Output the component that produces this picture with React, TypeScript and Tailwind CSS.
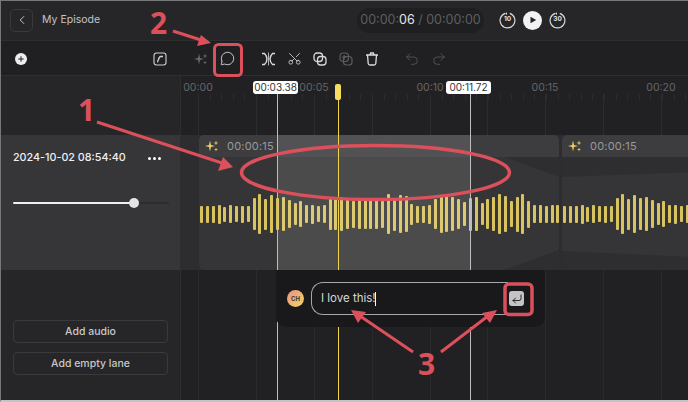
import React from "react";
import { MessageCircle, Scissors, Undo2, Redo2, ChevronLeft, Plus, CornerDownLeft } from "lucide-react";

const BARS = [17,17,17,19,15,18,16,17,16,32,40,31,38,32,34,28,22,26,18,19,16,18,32,32,34,30,27,29,30,30,30,27,40,33,38,36,21,17,17,19,30,38,36,34,30,24,33,34,22,30,34,40,36,26,35,40,27,18,18,17,18,18];
const MAJOR = [198,256,314,372,430,487,545,603,661];
const MINOR = Array.from({ length: 45 }, (_, i) => 198 + i * 11.6);
const LABELS = [["00:00",198],["00:05",314],["00:10",430],["00:15",545],["00:20",661]] as const;

function Sparkle({ dim }: { dim?: boolean }) {
  return (
    <svg width="14" height="14" viewBox="0 0 14 14" fill={dim ? "#6a6a6c" : "#e8cf5c"}>
      <path d="M5 1.5 L6 6 L10 7 L6 8 L5 12.5 L4 8 L0 7 L4 6 Z" />
      <path d="M11 1.5 L11.6 3.4 L13.5 4 L11.6 4.6 L11 6.5 L10.4 4.6 L8.5 4 L10.4 3.4 Z" />
      <path d="M11 8.5 L11.5 10 L13 10.5 L11.5 11 L11 12.5 L10.5 11 L9 10.5 L10.5 10 Z" />
    </svg>
  );
}

function Clip({ width, second }: { width: number; second?: boolean }) {
  return (
    <div className="relative h-full shrink-0 overflow-hidden rounded-[5px] bg-[#353537]" style={{ width }}>
      <svg className="absolute inset-0" width={width} height="135">
        {second ? (
          <>
            <polygon points="0,42 130,37 130,0 0,0" fill="#2e2e30" />
            <polygon points="0,116 130,122 130,135 0,135" fill="#2e2e30" />
          </>
        ) : (
          <>
            <polygon points="306,22 360,42 360,22" fill="#2e2e30" />
            <polygon points="360,115 305,135 360,135" fill="#2e2e30" />
          </>
        )}
      </svg>
      <div className="relative flex h-[22px] items-center gap-[8px] rounded-t-[5px] bg-[#3d3d3f] pl-[6px] font-['Inter',sans-serif] text-[11px] tracking-[0.2px] text-[#9a9a9c]">
        <Sparkle />
        <span>00:00:15</span>
      </div>
      <div className="relative mt-[36px] flex h-[42px] items-center gap-[2.85px] pl-[1px]">
        {BARS.map((h, i) => (
          <div key={i} className="w-[3px] shrink-0 rounded-[1px] bg-[#d9c35f]" style={{ height: h }} />
        ))}
      </div>
    </div>
  );
}

function Marker({ x, label }: { x: number; label: string }) {
  return (
    <div className="absolute top-[81px] h-[319px] w-px bg-[#bdbdbf]" style={{ left: x }}>
      <div className="absolute left-[-24px] top-0 flex h-[13px] w-[45px] items-center justify-center rounded-[3px] bg-white font-['Inter',sans-serif] text-[10px] text-[#333]">
        {label}
      </div>
    </div>
  );
}

function Seek({ label }: { label: string }) {
  return (
    <div className="relative flex h-[17px] w-[17px] items-center justify-center">
      <svg className="absolute inset-0" width="17" height="17" viewBox="0 0 17 17" fill="none" stroke="#d8d8da" strokeWidth="1.2">
        <path d="M6.2 1.4 A7.4 7.4 0 1 0 10.8 1.4" />
        <path d="M8 .2 L6 1.4 L8 3" fill="#d8d8da" stroke="none" />
      </svg>
      <span className="font-['Inter',sans-serif] text-[6.5px] font-bold text-[#e4e4e6]">{label}</span>
    </div>
  );
}

export default function App() {
  return (
    <div className="relative flex h-[402px] w-[688px] flex-col overflow-hidden bg-[#232325] font-['Inter',sans-serif]">
      {/* header */}
      <header className="flex h-[41px] shrink-0 items-center border-b border-[#2e2e30] bg-[#262628] pl-[10px]">
        <button className="flex h-[23px] w-[23px] items-center justify-center rounded-[5px] border border-[#3a3a3c] text-[#cfcfd1]">
          <ChevronLeft size={14} strokeWidth={1.6} />
        </button>
        <span className="ml-[9px] w-[58px] whitespace-nowrap text-[10.5px] text-[#c4c4c6]">My Episode</span>
        <div className="ml-[257px] flex h-[25px] w-[127px] shrink-0 items-center justify-center whitespace-nowrap rounded-full bg-[#1f1f21] text-[12.5px] text-[#5e5e60]">
          00:00:<span className="text-[#e6e6e8]">06</span>&nbsp;/ 00:00:00
        </div>
        <div className="ml-[15px] flex items-center gap-[7px]">
          <Seek label="10" />
          <div className="flex h-[19px] w-[19px] items-center justify-center rounded-full bg-[#f2f2f4]">
            <svg width="8" height="8" viewBox="0 0 8 8"><path d="M1.5 .8 L7.2 4 L1.5 7.2 Z" fill="#232325" /></svg>
          </div>
          <Seek label="30" />
        </div>
      </header>

      {/* toolbar */}
      <div className="flex h-[35px] shrink-0 items-center border-b border-[#2e2e30] bg-[#202022] pl-[15px] pt-[1px]">
        <div className="flex h-[12px] w-[12px] items-center justify-center rounded-full bg-[#eeeef0] text-[#202022]">
          <Plus size={8} strokeWidth={3} />
        </div>
        <svg className="ml-[126px]" width="14" height="14" viewBox="0 0 14 14" fill="none" stroke="#d0d0d2" strokeWidth="1.1">
          <rect x="1" y="1" width="12" height="12" rx="2.5" />
          <path d="M4 10 C5.5 10 5.5 4.5 7.5 4.5 L10 4.5" strokeWidth="1.4" />
        </svg>
        <div className="ml-[27px]"><Sparkle dim /></div>
        <MessageCircle className="ml-[12px] text-[#dcdcde]" size={15} strokeWidth={1.4} />
        <svg className="ml-[26px]" width="15" height="14" viewBox="0 0 15 14" fill="none" stroke="#d8d8da" strokeWidth="1.4">
          <path d="M1 1.5 H3.5 Q6 4 6 7 Q6 10 3.5 12.5 H1" />
          <path d="M14 1.5 H11.5 Q9 4 9 7 Q9 10 11.5 12.5 H14" />
          <path d="M7.5 .5 V13.5" strokeWidth="0.8" />
        </svg>
        <Scissors className="ml-[11px] rotate-[-90deg] text-[#d8d8da]" size={15} strokeWidth={1.3} />
        <svg className="ml-[11px]" width="14" height="14" viewBox="0 0 14 14" fill="none" stroke="#d8d8da" strokeWidth="1.3">
          <rect x="1" y="1" width="8.5" height="8.5" rx="3" />
          <rect x="4.5" y="4.5" width="8.5" height="8.5" rx="3" />
        </svg>
        <svg className="ml-[12px]" width="14" height="14" viewBox="0 0 14 14" fill="none" stroke="#5c5c5e" strokeWidth="1.2">
          <rect x="1" y="1" width="8.5" height="8.5" rx="3" />
          <rect x="4.5" y="4.5" width="8.5" height="8.5" rx="3" />
          <path d="M5.2 3 V7.5 M3 5.2 H7.5" />
        </svg>
        <svg className="ml-[12px]" width="14" height="14" viewBox="0 0 14 14" fill="none" stroke="#dcdcde" strokeWidth="1.3">
          <path d="M1 3 H13 M5 3 L5.6 1 H8.4 L9 3 M2.5 3 L3.2 11.5 Q3.4 13 5 13 H9 Q10.6 13 10.8 11.5 L11.5 3" />
        </svg>
        <Undo2 className="ml-[25px] text-[#5c5c5e]" size={16} strokeWidth={1.2} />
        <Redo2 className="ml-[11px] text-[#5c5c5e]" size={16} strokeWidth={1.2} />
      </div>

      {/* body */}
      <div className="flex min-h-0 flex-1">
        <aside className="flex w-[181px] shrink-0 flex-col border-r border-[#2e2e30] bg-[#262628]">
          <div className="h-[59px] shrink-0" />
          <div className="h-[135px] shrink-0 bg-[#363638] px-[13px] pt-[15px]">
            <div className="flex h-[16px] items-center justify-between whitespace-nowrap pr-[6px] text-[10.75px] font-medium text-[#f0f0f2]">
              <span>2024-10-02 08:54:40</span>
              <span className="flex gap-[2px]">
                <i className="h-[3px] w-[3px] rounded-full bg-white" />
                <i className="h-[3px] w-[3px] rounded-full bg-white" />
                <i className="h-[3px] w-[3px] rounded-full bg-white" />
              </span>
            </div>
            <div className="relative mt-[36px] h-[2px] w-[156px] bg-[#2c2c2e]">
              <div className="h-full w-[121px] rounded-full bg-[#f0f0f2]" />
              <div className="absolute left-[116px] top-[-4px] h-[10px] w-[10px] rounded-full bg-[#e4e4e6]" />
            </div>
          </div>
          <div className="flex flex-col gap-[9px] px-[13px] pt-[50px]">
            <button className="h-[23px] w-[155px] rounded-[4px] border border-[#3a3a3c] text-[10.5px] font-medium text-[#c8c8ca]">Add audio</button>
            <button className="h-[23px] w-[155px] rounded-[4px] border border-[#3a3a3c] text-[10.5px] font-medium text-[#c8c8ca]">Add empty lane</button>
          </div>
        </aside>

        <main className="flex min-w-0 flex-1 flex-col bg-[#212123]">
          <div className="h-[59px] shrink-0" />
          <div className="flex h-[135px] shrink-0 gap-[3px] overflow-hidden bg-[#2d2d2f] pl-[18px]">
            <Clip width={360} />
            <Clip width={130} second />
          </div>
        </main>
      </div>

      {/* timeline canvas: ruler and grid */}
      <div className="pointer-events-none absolute inset-0">
        {MINOR.filter((x) => x < 688).map((x) => (
          <div key={x} className="absolute top-[94px] h-[6px] w-px bg-[#2c2c2e]" style={{ left: x }} />
        ))}
        {MAJOR.map((x) => (
          <React.Fragment key={x}>
            <div className="absolute top-[94px] h-[41px] w-px bg-[#2c2c2e]" style={{ left: x }} />
            <div className="absolute top-[270px] h-[130px] w-px bg-[#2a2a2c]" style={{ left: x }} />
          </React.Fragment>
        ))}
        {LABELS.map(([t, x]) => (
          <span key={t} className="absolute top-[81px] w-[40px] text-center text-[10.5px] leading-[13px] text-[#666668]" style={{ left: x - 20 }}>{t}</span>
        ))}
        <div className="absolute left-[277px] top-[135px] h-[135px] w-[193px] bg-white/[0.11]" />
        <Marker x={277} label="00:03.38" />
        <Marker x={470} label="00:11.72" />
        <div className="absolute left-[338px] top-[84px] h-[316px] w-px bg-[#f0d44e]" />
        <div className="absolute left-[335px] top-[84px] h-[16px] w-[6px] rounded-[2px] bg-[#f5dc62]" />
      </div>

      {/* comment popover */}
      <div className="absolute left-[276px] top-[270px] flex h-[57px] w-[269px] items-center rounded-b-[10px] bg-[#19191b] pl-[11px]">
        <div className="flex h-[17px] w-[17px] shrink-0 items-center justify-center rounded-full bg-gradient-to-br from-[#e88f86] to-[#f0d75c] text-[6px] font-bold text-[#333]">CH</div>
        <div className="ml-[7px] flex h-[33px] w-[197px] shrink-0 items-center rounded-l-[12px] border-y border-l border-[#a8a8aa] pl-[9px] text-[11.5px] text-[#d8d8da]">
          I love this!<span className="ml-[-1px] h-[14px] w-px bg-white" />
        </div>
        <div className="ml-[1px] flex h-[15px] w-[15px] shrink-0 items-center justify-center rounded-[3px] bg-[#c4c4c6] text-[#2a2a2c]">
          <CornerDownLeft size={12} strokeWidth={2} />
        </div>
      </div>

      {/* annotations */}
      <svg className="pointer-events-none absolute inset-0" width="688" height="402" fill="none" stroke="#dc505c">
        <ellipse cx="375.5" cy="172.5" rx="134" ry="27" strokeWidth="3.5" />
        <rect x="214.5" y="44.5" width="27" height="31" rx="4" strokeWidth="3" />
        <rect x="505" y="284" width="27" height="30.5" rx="4" strokeWidth="3.5" />
        <g strokeWidth="3">
          <path d="M97 122 L222 163" />
          <path d="M173 31 L201 40" />
          <path d="M413 352 L360 316" />
          <path d="M441 352 L488 316" />
        </g>
        <g fill="#dc505c" stroke="none">
          <path d="M233 167 L218 171 L223 157 Z" />
          <path d="M211 43 L197 46 L201 35 Z" />
          <path d="M351 310 L366 312 L358 323 Z" />
          <path d="M497 310 L490 323 L482 313 Z" />
        </g>
      </svg>
      <span className="absolute left-[78px] top-[92px] font-['Open_Sans',sans-serif] text-[30px] font-bold leading-[36px] text-[#dc505c]">1</span>
      <span className="absolute left-[150px] top-[5px] font-['Open_Sans',sans-serif] text-[30px] font-bold leading-[36px] text-[#dc505c]">2</span>
      <span className="absolute left-[418px] top-[346px] font-['Open_Sans',sans-serif] text-[30px] font-bold leading-[36px] text-[#dc505c]">3</span>

      {/* screenshot edge */}
      <div className="pointer-events-none absolute inset-0 border-b-2 border-l border-t border-b-[#c4c4c6] border-l-[#77777a] border-t-[#77777a]" />
    </div>
  );
}
